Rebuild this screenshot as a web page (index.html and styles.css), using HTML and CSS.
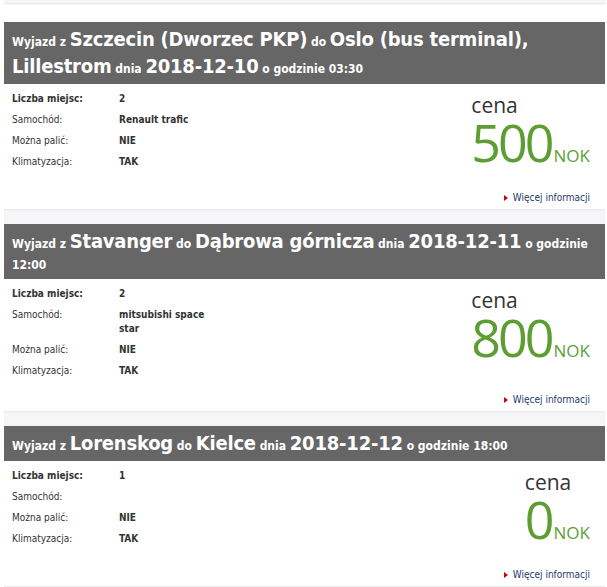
FILE: index.html
```html
<!DOCTYPE html>
<html lang="pl">
<head>
<meta charset="utf-8">
<title>Przejazdy</title>
<link rel="stylesheet" href="styles.css">
</head>
<body>
<div class="page">
  <div class="topband"></div>
  <div class="spacer"></div>

  <div class="card">
    <div class="head">Wyjazd z <span class="big">Szczecin (Dworzec PKP)</span> do <span class="big">Oslo (bus terminal), Lillestrom</span> dnia <span class="big">2018-12-10</span> o godzinie 03:30</div>
    <div class="body">
      <div class="row">
        <table class="info">
          <tr><td class="lab strong">Liczba miejsc:</td><td class="val">2</td></tr>
          <tr><td class="lab">Samochód:</td><td class="val">Renault trafic</td></tr>
          <tr><td class="lab">Można palić:</td><td class="val">NIE</td></tr>
          <tr><td class="lab">Klimatyzacja:</td><td class="val">TAK</td></tr>
        </table>
        <div class="price">
          <div class="cena">cena</div>
          <div class="amount"><span class="num">500</span><span class="cur">NOK</span></div>
        </div>
      </div>
      <div class="more"><a href="#"><span class="tri"></span>Więcej informacji</a></div>
    </div>
  </div>
  <div class="band"></div>

  <div class="card">
    <div class="head">Wyjazd z <span class="big">Stavanger</span> do <span class="big">Dąbrowa górnicza</span> dnia <span class="big">2018-12-11</span> o godzinie 12:00</div>
    <div class="body">
      <div class="row">
        <table class="info">
          <tr><td class="lab strong">Liczba miejsc:</td><td class="val">2</td></tr>
          <tr><td class="lab">Samochód:</td><td class="val">mitsubishi space star</td></tr>
          <tr><td class="lab">Można palić:</td><td class="val">NIE</td></tr>
          <tr><td class="lab">Klimatyzacja:</td><td class="val">TAK</td></tr>
        </table>
        <div class="price">
          <div class="cena">cena</div>
          <div class="amount"><span class="num">800</span><span class="cur">NOK</span></div>
        </div>
      </div>
      <div class="more"><a href="#"><span class="tri"></span>Więcej informacji</a></div>
    </div>
  </div>
  <div class="band"></div>

  <div class="card">
    <div class="head">Wyjazd z <span class="big">Lorenskog</span> do <span class="big">Kielce</span> dnia <span class="big">2018-12-12</span> o godzinie 18:00</div>
    <div class="body">
      <div class="row">
        <table class="info">
          <tr><td class="lab strong">Liczba miejsc:</td><td class="val">1</td></tr>
          <tr><td class="lab">Samochód:</td><td class="val"></td></tr>
          <tr><td class="lab">Można palić:</td><td class="val">NIE</td></tr>
          <tr><td class="lab">Klimatyzacja:</td><td class="val">TAK</td></tr>
        </table>
        <div class="price">
          <div class="cena">cena</div>
          <div class="amount"><span class="num">0</span><span class="cur">NOK</span></div>
        </div>
      </div>
      <div class="more"><a href="#"><span class="tri"></span>Więcej informacji</a></div>
    </div>
  </div>
  <div class="band"></div>
</div>
</body>
</html>
```

FILE: styles.css
```css
html, body {
  margin: 0;
  padding: 0;
  background: #ffffff;
}
body {
  font-family: "DejaVu Sans Condensed", "DejaVu Sans", sans-serif;
  color: #333333;
}
.page {
  padding: 0 2px 0 4px;
}
.topband {
  height: 3px;
  background: #f6f6f9;
  box-shadow: 0 1px 2px rgba(0, 0, 0, 0.12);
}
.spacer {
  height: 19px;
}
.card {
  background: #ffffff;
}
.head {
  background: #666666;
  color: #ffffff;
  font-family: "DejaVu Sans Condensed", "DejaVu Sans", sans-serif;
  font-weight: bold;
  font-size: 12px;
  line-height: 20px;
  padding: 4px 8px;
}
.big {
  font-size: 20px;
  line-height: 27px;
  letter-spacing: -0.2px;
}
.body {
  padding: 4px 15px 4px 8px;
}
.row {
  display: flex;
  justify-content: space-between;
  align-items: flex-start;
}
.info {
  border-collapse: collapse;
  font-size: 10px;
  line-height: 14px;
}
.info td {
  padding: 3.5px 0;
  vertical-align: top;
}
.lab {
  width: 107px;
}
.strong {
  font-weight: bold;
}
.val {
  width: 100px;
  font-weight: bold;
}
.price {
  font-family: "Open Sans", sans-serif;
  margin-top: 3px;
}
.cena {
  font-size: 21px;
  line-height: 28px;
  color: #333333;
}
.amount {
  color: #5c9e31;
  line-height: 46px;
  white-space: nowrap;
}
.num {
  font-size: 52px;
  letter-spacing: -3px;
}
.cur {
  font-size: 17px;
  color: #5ca037;
  margin-left: 2px;
}
.more {
  text-align: right;
  font-size: 10px;
  line-height: 14px;
  margin-top: 12px;
}
.more a {
  color: #1e3a6d;
  text-decoration: none;
}
.tri {
  display: inline-block;
  width: 0;
  height: 0;
  border-top: 3.5px solid transparent;
  border-bottom: 3.5px solid transparent;
  border-left: 4px solid #cc0000;
  margin-right: 5px;
  vertical-align: 0;
}
.band {
  height: 15px;
  background: #f6f6f9;
  box-shadow: inset 0 1px 2px rgba(0, 0, 0, 0.06);
}
```
